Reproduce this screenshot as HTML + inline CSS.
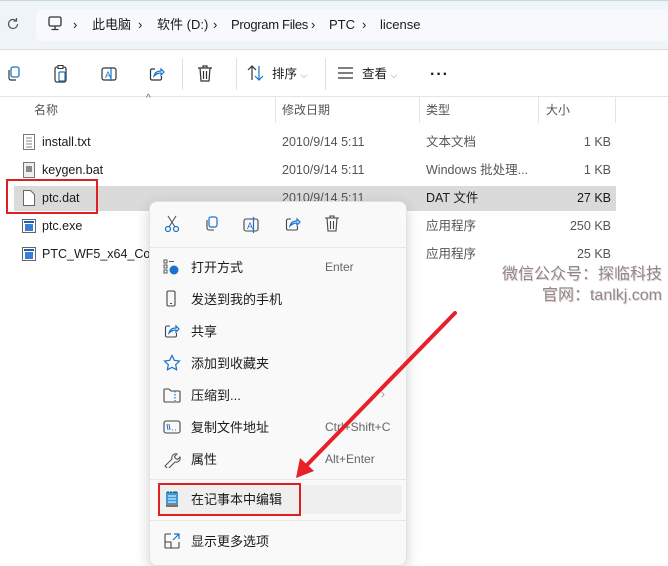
<!DOCTYPE html>
<html><head><meta charset="utf-8"><style>
*{margin:0;padding:0;box-sizing:border-box}
body{width:668px;height:560px;overflow:hidden;background:#fff;font-family:"Liberation Sans","Noto Sans CJK SC",sans-serif;position:relative;color:#1a1a1a;line-height:17px}
.a{position:absolute;white-space:nowrap;line-height:17px}
.top{position:absolute;left:0;top:0;width:668px;height:50px;background:#eff4f9}
.addr{position:absolute;left:36px;top:9px;width:640px;height:32px;background:#f7f9fc;border-radius:6px}
.t13{font-size:13px}
.g{color:#555}
.row{font-size:12.5px}
.mi{font-size:13px;color:#1a1a1a}
.sc{font-size:12px;color:#666}
</style></head><body>
<div class="top"><div class="addr"></div></div>
<div class="a" style="left:0;top:0;width:668px;height:1px;background:#cbd5e0"></div>
<div class="a" style="left:0;top:49px;width:668px;height:1px;background:#d8dde3"></div>
<svg class="a" style="left:6px;top:17px" width="14" height="14" viewBox="0 0 14 14"><path d="M11.5 7a4.5 4.5 0 1 1-1.4-3.3M10.5 1v3h-3" fill="none" stroke="#555" stroke-width="1.2"/></svg>
<svg class="a" style="left:46px;top:14px" width="18" height="18" viewBox="0 0 18 18"><rect x="3" y="3" width="12" height="9" rx="1.5" fill="none" stroke="#333" stroke-width="1.3"/><path d="M9 12v3M5.5 15.5h7" stroke="#333" stroke-width="1.3"/></svg>
<div class="a t13" style="left:73px;top:16px">›</div>
<div class="a t13" style="left:92px;top:16px">此电脑</div>
<div class="a t13" style="left:138px;top:16px">›</div>
<div class="a t13" style="left:157px;top:16px">软件 (D:)</div>
<div class="a t13" style="left:213px;top:16px">›</div>
<div class="a t13" style="left:231px;top:16px;letter-spacing:-0.3px">Program Files</div>
<div class="a t13" style="left:311px;top:16px">›</div>
<div class="a t13" style="left:329px;top:16px">PTC</div>
<div class="a t13" style="left:362px;top:16px">›</div>
<div class="a t13" style="left:380px;top:16px">license</div>
<svg class="a" style="left:5px;top:65px" width="18" height="18" viewBox="0 0 18 18"><rect x="6" y="2" width="8" height="10" rx="2" fill="none" stroke="#1a73c9" stroke-width="1.3"/><path d="M4 5v8a2 2 0 0 0 2 2h5" fill="none" stroke="#333" stroke-width="1.2"/></svg>
<svg class="a" style="left:52px;top:64px" width="18" height="20" viewBox="0 0 18 20"><rect x="3" y="3" width="11" height="15" rx="2" fill="none" stroke="#333" stroke-width="1.2"/><rect x="6" y="1.5" width="5" height="3" fill="#fff" stroke="#333" stroke-width="1"/><rect x="7" y="8" width="6" height="9" rx="1" fill="none" stroke="#1a73c9" stroke-width="1.2"/></svg>
<svg class="a" style="left:99px;top:64px" width="20" height="20" viewBox="0 0 20 20"><rect x="3" y="4" width="14" height="12" rx="2" fill="none" stroke="#333" stroke-width="1.2"/><text x="6" y="14" font-size="9" fill="#1a73c9" font-family="Liberation Sans">A</text><path d="M12 3v14" stroke="#1a73c9" stroke-width="1.2"/></svg>
<svg class="a" style="left:148px;top:65px" width="18" height="18" viewBox="0 0 18 18"><path d="M7 4H4a1.5 1.5 0 0 0-1.5 1.5v8A1.5 1.5 0 0 0 4 15h8a1.5 1.5 0 0 0 1.5-1.5V11" fill="none" stroke="#333" stroke-width="1.2"/><path d="M6 11c1-4 4-5 7-5V4l3 3-3 3V8c-3 0-5 1-7 3z" fill="none" stroke="#1a73c9" stroke-width="1.2"/></svg>
<svg class="a" style="left:196px;top:64px" width="18" height="20" viewBox="0 0 18 20"><path d="M2 4h14M7 4V2h4v2M4 4l1 13h8l1-13M7.5 7v8M10.5 7v8" fill="none" stroke="#333" stroke-width="1.2"/></svg>
<div class="a" style="left:182px;top:58px;width:1px;height:32px;background:#e0e0e0"></div>
<div class="a" style="left:236px;top:58px;width:1px;height:32px;background:#e0e0e0"></div>
<div class="a" style="left:325px;top:58px;width:1px;height:32px;background:#e0e0e0"></div>
<svg class="a" style="left:247px;top:65px" width="18" height="16" viewBox="0 0 18 16"><path d="M5 15V1M1 5l4-4 4 4" fill="none" stroke="#333" stroke-width="1.2"/><path d="M12 1v14M8 11l4 4 4-4" fill="none" stroke="#1a73c9" stroke-width="1.2"/></svg>
<div class="a" style="left:272px;top:66px;font-size:12.5px">排序 <span style="font-size:9px;color:#888">⌵</span></div>
<svg class="a" style="left:337px;top:67px" width="18" height="12" viewBox="0 0 18 12"><path d="M1 1h15M1 6h15M1 11h15" stroke="#333" stroke-width="1.2"/></svg>
<div class="a" style="left:362px;top:66px;font-size:12.5px">查看 <span style="font-size:9px;color:#888">⌵</span></div>
<div class="a" style="left:430px;top:66px;font-size:16px;font-weight:bold;letter-spacing:1px">···</div>
<div class="a" style="left:0;top:96px;width:668px;height:1px;background:#e5e5e5"></div>
<div class="a" style="left:146px;top:90px;font-size:10px;color:#666">^</div>
<div class="a g" style="left:34px;top:102px;font-size:12px">名称</div>
<div class="a g" style="left:282px;top:102px;font-size:12px">修改日期</div>
<div class="a g" style="left:426px;top:102px;font-size:12px">类型</div>
<div class="a g" style="left:546px;top:102px;font-size:12px">大小</div>
<div class="a" style="left:275px;top:97px;width:1px;height:26px;background:#e5e5e5"></div>
<div class="a" style="left:419px;top:97px;width:1px;height:26px;background:#e5e5e5"></div>
<div class="a" style="left:538px;top:97px;width:1px;height:26px;background:#e5e5e5"></div>
<div class="a" style="left:615px;top:97px;width:1px;height:26px;background:#e5e5e5"></div>
<div class="a" style="left:14px;top:186px;width:602px;height:25px;background:#dadada"></div>
<svg class="a" style="left:22px;top:134px" width="14" height="16" viewBox="0 0 14 16"><rect x="1.5" y="0.5" width="11" height="15" fill="#fff" stroke="#777"/><path d="M4 4h6M4 7h6M4 10h6M4 13h6" stroke="#888"/></svg>
<svg class="a" style="left:22px;top:162px" width="14" height="16" viewBox="0 0 14 16"><rect x="1.5" y="0.5" width="11" height="15" fill="#eee" stroke="#777"/><rect x="4" y="4" width="6" height="6" fill="#8a8a8a"/></svg>
<svg class="a" style="left:22px;top:190px" width="14" height="16" viewBox="0 0 14 16"><path d="M1.5 0.5h7l4 4v11h-11z" fill="#fff" stroke="#666"/></svg>
<svg class="a" style="left:22px;top:218px" width="14" height="16" viewBox="0 0 14 16"><rect x="0.5" y="1.5" width="13" height="13" fill="#fff" stroke="#666"/><rect x="2" y="3" width="10" height="2" fill="#1e5fb4"/><rect x="3" y="6" width="8" height="7" fill="#3b7ed6"/></svg>
<svg class="a" style="left:22px;top:246px" width="14" height="16" viewBox="0 0 14 16"><rect x="0.5" y="1.5" width="13" height="13" fill="#fff" stroke="#666"/><rect x="2" y="3" width="10" height="2" fill="#1e5fb4"/><rect x="3" y="6" width="8" height="7" fill="#3b7ed6"/></svg>
<div class="a row" style="left:42px;top:134px">install.txt</div>
<div class="a row" style="left:42px;top:162px">keygen.bat</div>
<div class="a row" style="left:42px;top:190px">ptc.dat</div>
<div class="a row" style="left:42px;top:218px">ptc.exe</div>
<div class="a row" style="left:42px;top:246px">PTC_WF5_x64_Corr</div>
<div class="a row g" style="left:282px;top:134px">2010/9/14 5:11</div>
<div class="a row g" style="left:282px;top:162px">2010/9/14 5:11</div>
<div class="a row g" style="left:282px;top:190px">2010/9/14 5:11</div>
<div class="a row g" style="left:426px;top:134px">文本文档</div>
<div class="a row g" style="left:426px;top:162px">Windows 批处理...</div>
<div class="a row" style="left:426px;top:190px">DAT 文件</div>
<div class="a row g" style="left:426px;top:218px">应用程序</div>
<div class="a row g" style="left:426px;top:246px">应用程序</div>
<div class="a row g" style="right:57px;top:134px">1 KB</div>
<div class="a row g" style="right:57px;top:162px">1 KB</div>
<div class="a row" style="right:57px;top:190px">27 KB</div>
<div class="a row g" style="right:57px;top:218px">250 KB</div>
<div class="a row g" style="right:57px;top:246px">25 KB</div>
<div class="a" style="left:6px;top:179px;width:92px;height:35px;border:2px solid #e02020"></div>
<div class="a" style="right:6px;top:265px;font-size:16px;line-height:20px;color:#8a8a8a;text-shadow:1px 1px 0 #f0d8d8">微信公众号：探临科技</div>
<div class="a" style="right:6px;top:286px;font-size:16px;line-height:20px;color:#8a8a8a;text-shadow:1px 1px 0 #f0d8d8">官网：tanlkj.com</div>
<div class="a" style="left:149px;top:201px;width:258px;height:365px;background:#f9f9f9;border:1px solid #e2e2e2;border-radius:8px;box-shadow:0 4px 14px rgba(0,0,0,.18)"></div>
<div class="a" style="left:150px;top:247px;width:256px;height:1px;background:#e6e6e6"></div>
<svg class="a" style="left:163px;top:215px" width="18" height="18" viewBox="0 0 18 18"><path d="M5 1l7 11M13 1L6 12" stroke="#555" stroke-width="1.1"/><circle cx="5" cy="14" r="2.5" fill="none" stroke="#1a73c9" stroke-width="1.2"/><circle cx="13" cy="14" r="2.5" fill="none" stroke="#1a73c9" stroke-width="1.2"/></svg>
<svg class="a" style="left:203px;top:215px" width="18" height="18" viewBox="0 0 18 18"><rect x="6" y="2" width="8" height="10" rx="2" fill="none" stroke="#1a73c9" stroke-width="1.2"/><path d="M4 5v8a2 2 0 0 0 2 2h5" fill="none" stroke="#444" stroke-width="1.1"/></svg>
<svg class="a" style="left:242px;top:215px" width="20" height="20" viewBox="0 0 20 20"><rect x="2" y="4" width="14" height="12" rx="2" fill="none" stroke="#444" stroke-width="1.1"/><text x="5" y="14" font-size="9" fill="#1a73c9" font-family="Liberation Sans">A</text><path d="M11.5 2v16" stroke="#1a73c9" stroke-width="1.2"/></svg>
<svg class="a" style="left:284px;top:215px" width="18" height="18" viewBox="0 0 18 18"><path d="M7 4H4a1.5 1.5 0 0 0-1.5 1.5v8A1.5 1.5 0 0 0 4 15h8a1.5 1.5 0 0 0 1.5-1.5V11" fill="none" stroke="#444" stroke-width="1.1"/><path d="M6 11c1-4 4-5 7-5V4l3 3-3 3V8c-3 0-5 1-7 3z" fill="none" stroke="#1a73c9" stroke-width="1.2"/></svg>
<svg class="a" style="left:323px;top:214px" width="18" height="20" viewBox="0 0 18 20"><path d="M2 4h14M7 4V2h4v2M4 4l1 13h8l1-13M7.5 7v8M10.5 7v8" fill="none" stroke="#444" stroke-width="1.1"/></svg>
<svg class="a" style="left:163px;top:259px" width="16" height="16" viewBox="0 0 16 16"><rect x="1" y="1" width="3" height="3" fill="none" stroke="#555"/><rect x="1" y="6" width="3" height="3" fill="none" stroke="#555"/><rect x="1" y="11" width="3" height="3" fill="none" stroke="#555"/><path d="M6 2.5h5" stroke="#555"/><circle cx="11" cy="11" r="4.5" fill="#1a73c9"/></svg>
<div class="a mi" style="left:191px;top:259px">打开方式</div><div class="a sc" style="left:325px;top:259px">Enter</div>
<svg class="a" style="left:165px;top:290px" width="12" height="18" viewBox="0 0 12 18"><rect x="2" y="1" width="8" height="15" rx="1.5" fill="none" stroke="#444" stroke-width="1.1"/><path d="M5 13.5h2" stroke="#444"/></svg>
<div class="a mi" style="left:191px;top:291px">发送到我的手机</div>
<svg class="a" style="left:163px;top:322px" width="18" height="18" viewBox="0 0 18 18"><path d="M7 4H4a1.5 1.5 0 0 0-1.5 1.5v8A1.5 1.5 0 0 0 4 15h8a1.5 1.5 0 0 0 1.5-1.5V11" fill="none" stroke="#444" stroke-width="1.1"/><path d="M6 11c1-4 4-5 7-5V4l3 3-3 3V8c-3 0-5 1-7 3z" fill="none" stroke="#1a73c9" stroke-width="1.2"/></svg>
<div class="a mi" style="left:191px;top:323px">共享</div>
<svg class="a" style="left:163px;top:354px" width="18" height="18" viewBox="0 0 18 18"><path d="M9 1.5l2.3 4.8 5.2.7-3.8 3.6.9 5.2L9 13.3l-4.6 2.5.9-5.2L1.5 7l5.2-.7z" fill="none" stroke="#1a73c9" stroke-width="1.2"/></svg>
<div class="a mi" style="left:191px;top:355px">添加到收藏夹</div>
<svg class="a" style="left:163px;top:387px" width="18" height="16" viewBox="0 0 18 16"><path d="M1 3a1 1 0 0 1 1-1h4l2 2h8a1 1 0 0 1 1 1v9a1 1 0 0 1-1 1H2a1 1 0 0 1-1-1z" fill="none" stroke="#444" stroke-width="1.1"/><path d="M12 4v10" stroke="#1a73c9" stroke-width="1.2" stroke-dasharray="1.5 1.5"/></svg>
<div class="a mi" style="left:191px;top:387px">压缩到...</div><div class="a sc" style="left:381px;top:386px;color:#999">›</div>
<svg class="a" style="left:163px;top:419px" width="18" height="16" viewBox="0 0 18 16"><rect x="1" y="2" width="16" height="12" rx="2" fill="none" stroke="#444" stroke-width="1.1"/><path d="M4 5l1 6M6 5l1 6M9 11h1M12 11h1" stroke="#1a73c9"/></svg>
<div class="a mi" style="left:191px;top:419px">复制文件地址</div><div class="a sc" style="left:325px;top:419px">Ctrl+Shift+C</div>
<svg class="a" style="left:163px;top:450px" width="18" height="18" viewBox="0 0 18 18"><path d="M2 16l7-7a4 4 0 0 1 5-5l-2.5 2.5 1 2 2 1L17 7a4 4 0 0 1-5 5l-7 7z" fill="none" stroke="#555" stroke-width="1.1"/></svg>
<div class="a mi" style="left:191px;top:451px">属性</div><div class="a sc" style="left:325px;top:451px">Alt+Enter</div>
<div class="a" style="left:150px;top:479px;width:256px;height:1px;background:#e6e6e6"></div>
<div class="a" style="left:159px;top:485px;width:243px;height:29px;background:#efefef;border-radius:4px"></div>
<svg class="a" style="left:165px;top:490px" width="14" height="18" viewBox="0 0 14 18"><rect x="1" y="2" width="12" height="15" fill="#3a9ad9"/><path d="M3 6h8M3 9h8M3 12h8" stroke="#fff"/><rect x="1" y="15" width="12" height="2" fill="#a06a30"/><path d="M3 1v2M6 1v2M9 1v2M11 1v2" stroke="#333"/></svg>
<div class="a mi" style="left:191px;top:491px">在记事本中编辑</div>
<div class="a" style="left:158px;top:483px;width:143px;height:33px;border:2px solid #e02020"></div>
<div class="a" style="left:150px;top:520px;width:256px;height:1px;background:#e6e6e6"></div>
<svg class="a" style="left:163px;top:532px" width="18" height="18" viewBox="0 0 18 18"><path d="M8 2H3a1 1 0 0 0-1 1v12a1 1 0 0 0 1 1h12a1 1 0 0 0 1-1v-5M2 10h6v6" fill="none" stroke="#444" stroke-width="1.1"/><path d="M11 2h5v5M16 2l-6 6" fill="none" stroke="#1a73c9" stroke-width="1.2"/></svg>
<div class="a mi" style="left:191px;top:533px">显示更多选项</div>
<svg class="a" style="left:0;top:0" width="668" height="560" viewBox="0 0 668 560"><path d="M455 313L304 468" stroke="#e8202a" stroke-width="4" stroke-linecap="round"/><path d="M296 478l4-20 14 13z" fill="#e8202a"/></svg>
</body></html>
